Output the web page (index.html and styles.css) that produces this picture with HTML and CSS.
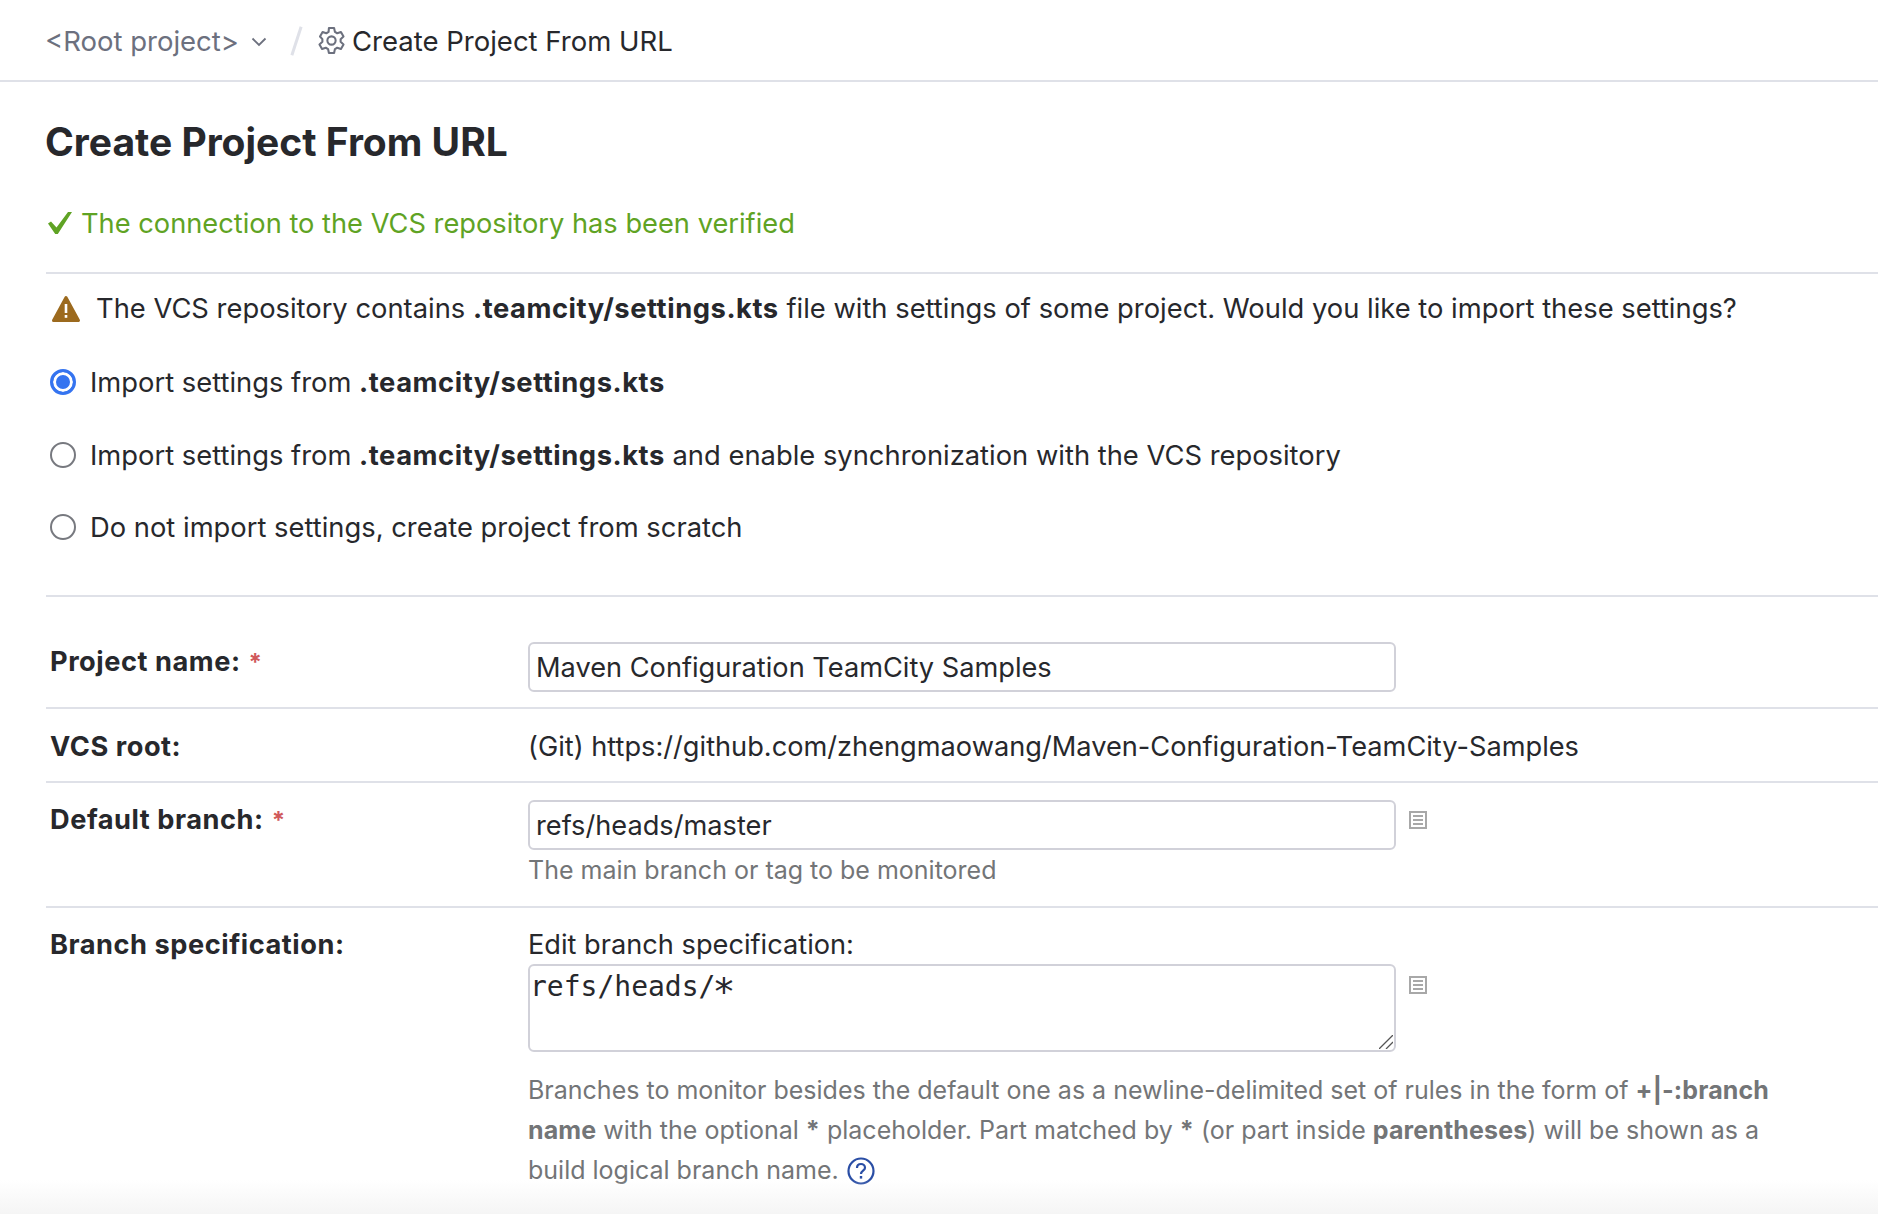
FILE: index.html
```html
<!DOCTYPE html>
<html lang="en">
<head>
<meta charset="utf-8">
<title>Create Project From URL</title>
<link rel="stylesheet" href="styles.css">
</head>
<body>
<header class="crumbs">
  <span class="crumb-root">&lt;Root project&gt;</span>
  <svg class="chev" viewBox="0 0 16 10" width="16" height="10"><path d="M1.500 1.500 8 8l6.500-6.500" fill="none" stroke="#6c707e" stroke-width="1.800"/></svg>
  <span class="crumb-sep"></span>
  <svg class="gear" viewBox="0 0 28 28" width="29" height="29"><g fill="none" stroke="#6c707e" stroke-width="2" stroke-linejoin="round"><path d="M11.500 2h5l.8 3.700 2.200 1.300 3.600-1.200 2.500 4.400-2.800 2.500v2.600l2.800 2.500-2.500 4.400-3.600-1.200-2.200 1.300-.8 3.700h-5l-.8-3.700-2.200-1.300-3.600 1.200-2.500-4.400 2.800-2.500v-2.600L2.900 10.200l2.500-4.400L9 7l2.200-1.300z"/><circle cx="14" cy="14" r="4"/></g></svg>
  <span class="crumb-current">Create Project From URL</span>
</header>
<main class="page">
  <h1 class="title">Create Project From URL</h1>
  <p class="verified">
    <svg class="check" viewBox="0 0 24 22" width="24" height="22"><path d="M0 11.500 3 9.500 8.500 15.500 20 0h4L9.800 22H7.200z" fill="#5fa324"/></svg>
    The connection to the VCS repository has been verified
  </p>
  <div class="import">
    <p class="warning">
      <svg class="warn" viewBox="0 0 30 28" width="30" height="28"><path d="M15 2.500 27.500 25.500h-25z" fill="#9c6a1e" stroke="#9c6a1e" stroke-width="3" stroke-linejoin="round"/><rect x="13.700" y="9" width="2.600" height="9" fill="#fff"/><rect x="13.700" y="20" width="2.600" height="2.800" fill="#fff"/></svg>
      <span>The VCS repository contains <b>.teamcity/settings.kts</b> file with settings of some project. Would you like to import these settings?</span>
    </p>
    <label class="radio"><span class="dot on"></span><span>Import settings from <b>.teamcity/settings.kts</b></span></label>
    <label class="radio"><span class="dot"></span><span>Import settings from <b>.teamcity/settings.kts</b> and enable synchronization with the VCS repository</span></label>
    <label class="radio"><span class="dot"></span><span>Do not import settings, create project from scratch</span></label>
  </div>
  <section class="row row-name">
    <div class="label">Project name: <span class="req">*</span></div>
    <div class="value"><div class="input">Maven Configuration TeamCity Samples</div></div>
  </section>
  <section class="row row-vcs">
    <div class="label">VCS root:</div>
    <div class="value">(Git) https://github.com/zhengmaowang/Maven-Configuration-TeamCity-Samples</div>
  </section>
  <section class="row row-branch">
    <div class="label">Default branch: <span class="req">*</span></div>
    <div class="value">
      <div class="with-icon">
        <div class="input">refs/heads/master</div>
        <svg class="list" viewBox="0 0 18 18" width="18" height="18"><path d="M1 1h16v16H1zM4 5h10M4 9h10M4 13h10" fill="none" stroke="#a8a8a8" stroke-width="2"/></svg>
      </div>
      <p class="help help-short">The main branch or tag to be monitored</p>
    </div>
  </section>
  <section class="row row-spec">
    <div class="label">Branch specification:</div>
    <div class="value">
      <div class="edit-label">Edit branch specification:</div>
      <div class="with-icon">
        <div class="textarea">refs/heads/<span class="star">*</span>
          <svg class="grip" viewBox="0 0 14 14" width="14" height="14"><path d="M0 14 14 0M7 14l7-7" stroke="#555" stroke-width="1.300" fill="none"/></svg>
        </div>
        <svg class="list list-spec" viewBox="0 0 18 18" width="18" height="18"><path d="M1 1h16v16H1zM4 5h10M4 9h10M4 13h10" fill="none" stroke="#a8a8a8" stroke-width="2"/></svg>
      </div>
      <p class="help help-long">Branches to monitor besides the default one as a newline-delimited set of rules in the form of <b>+|-:branch name</b> with the optional <b>*</b> placeholder. Part matched by <b>*</b> (or part inside <b>parentheses</b>) will be shown as a build logical branch name. <svg class="q" viewBox="0 0 28 28" width="28" height="28"><circle cx="14" cy="14" r="12.500" fill="none" stroke="#2a4ea5" stroke-width="2.200"/><path d="M10 11c0-2.500 1.800-4 4-4s4 1.500 4 3.700c0 3-4 3-4 6.300" fill="none" stroke="#2a4ea5" stroke-width="2.200"/><rect x="12.800" y="19" width="2.400" height="2.600" fill="#2a4ea5"/></svg></p>
    </div>
  </section>
</main>
<div class="fade"></div>
</body>
</html>
```
FILE: styles.css
```css
* { box-sizing: border-box; }
html, body { margin: 0; padding: 0; height: 1214px; overflow: hidden; }
body {
  background: #fff;
  color: #27282c;
  font-family: Inter, "Liberation Sans", sans-serif;
  font-size: 27.2px;
  line-height: 40px;
  position: relative;
}
p { margin: 0; }
b { font-weight: 700; letter-spacing: .02em; }

.crumbs {
  height: 82px;
  padding: 1px 0 0 45px;
  border-bottom: 2px solid #dfe1e8;
  display: flex;
  align-items: center;
  font-size: 27.5px;
}
.crumb-root { color: #6c707e; }
.chev { margin-left: 12px; margin-top: 2px; }
.crumb-sep {
  width: 3px;
  height: 30px;
  margin: 0 19px 0 28px;
  background: #dfe1e8;
  transform: rotate(18deg);
}
.gear { margin-right: 6px; }

.page { padding-left: 46px; }
.title {
  margin: 0 0 0 -1px;
  padding-top: 37px;
  font-size: 39px;
  line-height: 46px;
  font-weight: 700;
}
.verified {
  margin-top: 40px;
  height: 69px;
  padding-bottom: 29px;
  color: #5fa324;
  display: flex;
  align-items: center;
  gap: 9px;
  border-bottom: 2px solid #dfe1e8;
  white-space: nowrap;
  font-size: 27.25px;
}
.check { margin-left: 2px; margin-top: -2px; }
.import { height: 323px; border-bottom: 2px solid #dfe1e8; padding-top: 15px; font-size: 27.35px; }
.warning { display: flex; align-items: center; gap: 15px; padding-left: 5px; height: 40px; white-space: nowrap; }
.radio { display: flex; align-items: center; gap: 14px; height: 40px; margin-top: 32.5px; padding-left: 4px; white-space: nowrap; }
.warning + .radio { margin-top: 34px; }
.dot {
  width: 26px;
  height: 26px;
  border-radius: 50%;
  border: 2px solid #77797f;
  margin-top: -2px;
  background: #fff;
  flex: none;
}
.dot.on { border: 3px solid #3574f0; box-shadow: inset 0 0 0 3px #fff; background: #3574f0; }

.row {
  display: grid;
  grid-template-columns: 482px 1fr;
  border-bottom: 2px solid #dfe1e8;
}
.label { padding-left: 4px; font-weight: 700; letter-spacing: .02em; }
.req { color: #d0595b; font-size: 24px; margin-left: 1px; }
.row-name { height: 112px; padding-top: 45px; }
.row-vcs { height: 74px; padding-top: 18px; }
.row-branch { height: 125px; padding-top: 17px; }
.row-spec { border-bottom: 0; padding-top: 17px; }
.with-icon { display: flex; align-items: flex-start; gap: 13px; }
.list { margin-top: 11px; flex: none; }
.list-spec { margin-top: 12px; }
.input {
  width: 868px;
  height: 50px;
  border: 2px solid #d1d1d9;
  border-radius: 6px;
  padding: 4px 6px;
  flex: none;
}
.help { color: #737577; font-size: 25px; }
.help b { letter-spacing: .005em; }
.help-short { margin-top: 2px; line-height: 36px; }
.edit-label { height: 39px; padding-top: 4px; line-height: 32px; }
.textarea {
  position: relative;
  width: 868px;
  height: 88px;
  border: 2px solid #d1d1d9;
  border-radius: 6px;
  padding: 5px 0 0;
  font-family: "DejaVu Sans Mono", monospace;
  font-size: 28px;
  line-height: 32px;
  flex: none;
}
.star { font-size: 38px; line-height: 20px; vertical-align: -9px; margin-left: -3px; }
.grip { position: absolute; right: 1px; bottom: 1px; }
.help-long { margin-top: 18px; width: 1285px; }
.q { vertical-align: -6px; margin-left: 1px; }

.fade {
  position: absolute;
  left: 0;
  right: 0;
  bottom: 0;
  height: 34px;
  background: linear-gradient(to bottom, rgba(245,245,245,0), #f5f5f5);
}
```
